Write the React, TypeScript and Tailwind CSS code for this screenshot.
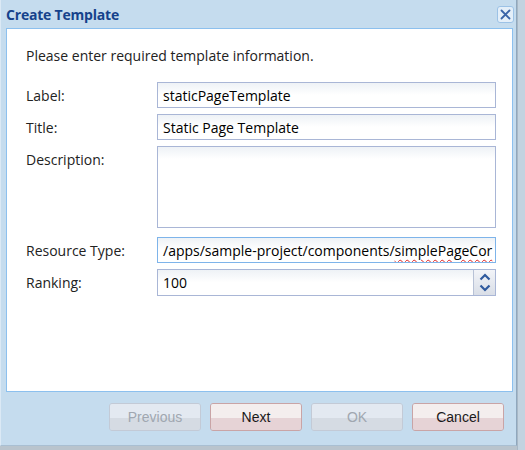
import React from 'react';

const font = { fontFamily: '"Open Sans", "Noto Sans", sans-serif' };

function Field({ value, focused, children }: { value?: string; focused?: boolean; children?: React.ReactNode }) {
  return (
    <div
      className={`h-[26px] w-[339px] border bg-gradient-to-b from-[#eef2f6] via-white to-white flex items-center pl-[5px] overflow-hidden whitespace-nowrap text-[14px] text-black ${focused ? 'border-[#7eb4ea]' : 'border-[#a9b6d6]'}`}
    >
      {children ?? value}
    </div>
  );
}

function Btn({ label, disabled }: { label: string; disabled?: boolean }) {
  return (
    <div
      className={`w-[92px] h-[28px] rounded-[3px] border flex flex-col overflow-hidden relative ${disabled ? 'border-[#c3cad6]' : 'border-[#c9a4a6]'}`}
    >
      <div className={`h-[14px] ${disabled ? 'bg-[#e3e9f1]' : 'bg-[#f4eeee]'}`} />
      <div className={`flex-1 ${disabled ? 'bg-[#d5dbe3]' : 'bg-[#e6d3d6]'}`} />
      <span
        className={`absolute inset-0 flex items-center justify-center text-[14px] ${disabled ? 'text-[#a0a7b0]' : 'text-[#1a1a1a]'}`}
        style={{ fontFamily: '"Liberation Sans", Arial, sans-serif' }}
      >
        {label}
      </span>
    </div>
  );
}

export default function App() {
  return (
    <div className="w-[525px] h-[450px] bg-[#b9c4cd] flex overflow-hidden" style={font}>
      {/* window */}
      <div className="w-[517px] h-[446px] bg-[#c5dcee] border-l border-l-[#dbe9f5] border-r border-r-[#8fa7bd] border-b border-b-[#a9bfd2] flex flex-col">
        {/* title bar */}
        <div className="h-[28px] flex items-center justify-between pl-[5px] pr-[2px]">
          <span className="text-[14px] font-bold text-[#15428b] tracking-[-0.2px]">Create Template</span>
          <div className="w-[17px] h-[17px] rounded-[3px] border border-[#9cc2e6] bg-[#e4eff9] flex items-center justify-center">
            <svg width="11" height="11" viewBox="0 0 11 11">
              <path d="M1.5 1.5 L9.5 9.5 M9.5 1.5 L1.5 9.5" stroke="#3a64a8" strokeWidth="1.8" strokeLinecap="round" />
            </svg>
          </div>
        </div>

        {/* panel */}
        <div className="ml-[5px] mr-[3px] h-[364px] bg-white border border-[#8cc0ee] pl-[19px] text-[14px] text-[#222]">
          <div className="mt-[17px] h-[20px] leading-[20px]">Please enter required template information.</div>

          <div className="mt-[16px] flex items-center">
            <div className="w-[131px]">Label:</div>
            <Field value="staticPageTemplate" />
          </div>
          <div className="mt-[6px] flex items-center">
            <div className="w-[131px]">Title:</div>
            <Field value="Static Page Template" />
          </div>
          <div className="mt-[6px] flex items-start">
            <div className="w-[131px] mt-[3px]">Description:</div>
            <div className="h-[82px] w-[339px] border border-[#a9b6d6] bg-gradient-to-b from-[#eef2f6] via-white via-[15%] to-white" />
          </div>
          <div className="mt-[9px] flex items-center">
            <div className="w-[131px]">Resource Type:</div>
            <Field focused>
              /apps/sample-project/components/
              <span className="underline decoration-wavy decoration-[#e02020] decoration-1 underline-offset-[3px]">simplePageCor</span>
            </Field>
          </div>
          <div className="mt-[6px] flex items-center">
            <div className="w-[131px]">Ranking:</div>
            <div className="h-[27px] w-[339px] border border-[#a9b6d6] flex">
              <div className="flex-1 bg-gradient-to-b from-[#eef2f6] via-white to-white flex items-center pl-[5px] text-black">100</div>
              <div className="w-[22px] border-l border-[#b8c2d6] bg-gradient-to-b from-[#f2f4f8] to-[#d9dee7] flex flex-col items-center justify-center gap-[3px]">
                <svg width="12" height="8" viewBox="0 0 12 8">
                  <path d="M1.5 6.5 L6 2 L10.5 6.5" fill="none" stroke="#2f5a9e" strokeWidth="2.2" />
                </svg>
                <svg width="12" height="8" viewBox="0 0 12 8">
                  <path d="M1.5 1.5 L6 6 L10.5 1.5" fill="none" stroke="#2f5a9e" strokeWidth="2.2" />
                </svg>
              </div>
            </div>
          </div>
        </div>

        {/* buttons */}
        <div className="mt-[11px] flex justify-end gap-[9px] pr-[12px]">
          <Btn label="Previous" disabled />
          <Btn label="Next" />
          <Btn label="OK" disabled />
          <Btn label="Cancel" />
        </div>
      </div>
      <div className="w-[8px] h-full bg-[#c3d3e0] border-l border-[#a8b8c6]" />
    </div>
  );
}
